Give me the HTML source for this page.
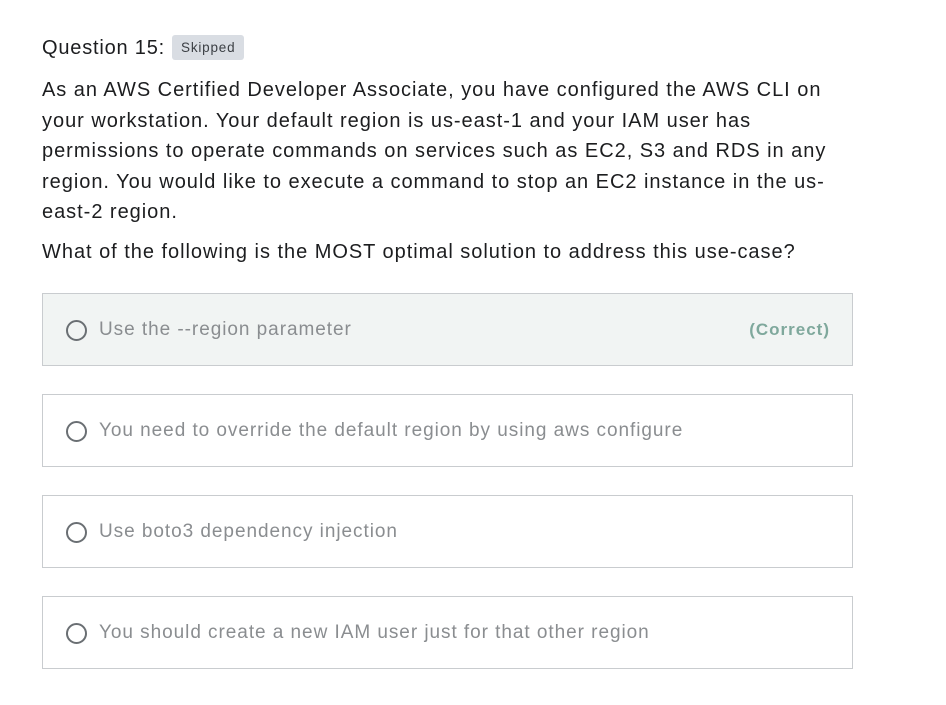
<!DOCTYPE html>
<html><head><style>
body{margin:0;background:#fff;font-family:"Liberation Sans",sans-serif;color:#1c1d1f;width:946px;height:705px;overflow:hidden}
.q{position:absolute;left:42px;top:35px;font-size:20px;letter-spacing:0.8px}
.badge{display:inline-block;background:#d9dde3;color:#3b3f44;font-size:13.5px;padding:5px 9px;border-radius:3px;margin-left:7px;vertical-align:2px;letter-spacing:0.8px}
.p{position:absolute;left:42px;width:880px;font-size:20px;line-height:30.5px;letter-spacing:0.97px;white-space:nowrap}
.opt{position:absolute;left:42px;width:809px;height:71px;border:1px solid #c9cccf;font-size:19px;color:#8a8d90;letter-spacing:0.95px}
.opt.c{background:#f1f4f3}
.opt .r{position:absolute;left:23px;top:26px;width:17px;height:17px;border:2px solid #6a6f73;border-radius:50%}
.opt .t{position:absolute;left:56px;top:25px}
.opt .k{position:absolute;right:22px;top:26px;font-size:17px;font-weight:bold;color:#7fa89c;letter-spacing:1px}
</style></head><body>
<div class="q">Question 15:<span class="badge">Skipped</span></div>
<div class="p" style="top:75px">As an AWS Certified Developer Associate, you have configured the AWS CLI on<br>your workstation. Your default region is us-east-1 and your IAM user has<br>permissions to operate commands on services such as EC2, S3 and RDS in any<br>region. You would like to execute a command to stop an EC2 instance in the us-<br>east-2 region.</div>
<div class="p" style="top:237px">What of the following is the MOST optimal solution to address this use-case?</div>
<div class="opt c" style="top:293px"><div class="r"></div><div class="t">Use the --region parameter</div><div class="k">(Correct)</div></div>
<div class="opt" style="top:394px"><div class="r"></div><div class="t">You need to override the default region by using aws configure</div></div>
<div class="opt" style="top:495px"><div class="r"></div><div class="t">Use boto3 dependency injection</div></div>
<div class="opt" style="top:596px"><div class="r"></div><div class="t">You should create a new IAM user just for that other region</div></div>
</body></html>
